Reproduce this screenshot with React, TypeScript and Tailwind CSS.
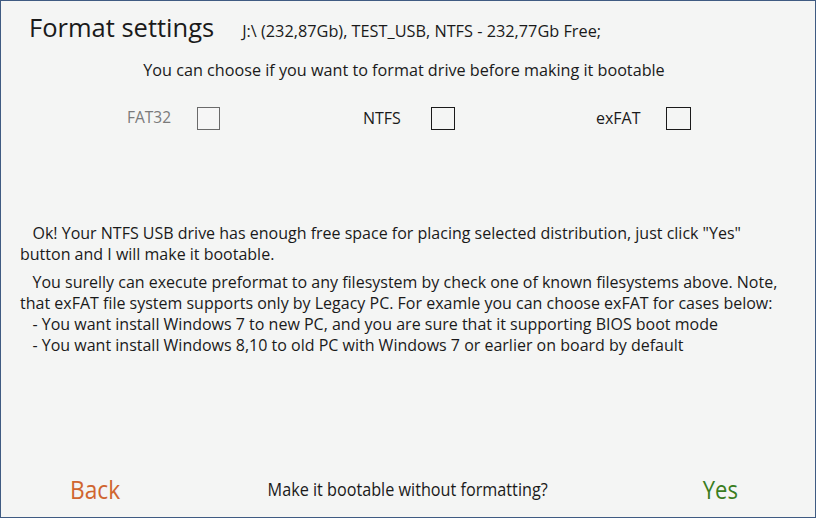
export default function App() {
  const body = "text-[16px] leading-[21px] text-[#1a1a1a] whitespace-pre";

  return (
    <div
      className="flex h-[518px] w-[816px] flex-col border border-[#3f5b82] bg-[#f4f5f4] text-[#1a1a1a]"
      style={{ fontFamily: '"Open Sans", "Noto Sans", sans-serif' }}
    >
      {/* header */}
      <div className="flex items-baseline pl-[28px] pt-[8px]">
        <h1 className="text-[25.5px] leading-[36px] font-normal">Format settings</h1>
        <span className="ml-[28px] text-[16.3px]">J:\ (232,87Gb), TEST_USB, NTFS - 232,77Gb Free;</span>
      </div>

      <p className="mt-[15px] pr-[8px] text-center text-[16.2px] leading-[20px]">
        You can choose if you want to format drive before making it bootable
      </p>

      {/* filesystem options */}
      <div className="mt-[26px] flex items-center pl-[126px] text-[16px]">
        <label className="flex w-[236px] items-center">
          <span className="w-[70px] text-[15.5px] text-[#7a7a7a]">FAT32</span>
          <span className="h-[23px] w-[23px] border border-[#6a6a6a] bg-[#f6f6f6]" />
        </label>
        <label className="flex w-[233px] items-center">
          <span className="w-[68px]">NTFS</span>
          <span className="h-[23px] w-[24px] border border-[#1a1a1a]" />
        </label>
        <label className="flex items-center">
          <span className="w-[70px]">exFAT</span>
          <span className="h-[23px] w-[25px] border border-[#1a1a1a]" />
        </label>
      </div>

      {/* info text */}
      <div className="mt-[93px] pl-[19px]">
        <div className={body}>{'   Ok! Your NTFS USB drive has enough free space for placing selected distribution, just click "Yes"'}</div>
        <div className={body}>button and I will make it bootable.</div>
        <div className={`${body} mt-[7px]`}>{"   You surelly can execute preformat to any filesystem by check one of known filesystems above. Note,"}</div>
        <div className={body}>that exFAT file system supports only by Legacy PC. For examle you can choose exFAT for cases below:</div>
        <div className={body}>{"   - You want install Windows 7 to new PC, and you are sure that it supporting BIOS boot mode"}</div>
        <div className={body}>{"   - You want install Windows 8,10 to old PC with Windows 7 or earlier on board by default"}</div>
      </div>

      {/* footer */}
      <div className="mt-auto mb-[12px] flex items-center justify-between pl-[69px] pr-[77px]">
        <button type="button" className="origin-left scale-x-[0.91] text-[25px] leading-[32px] text-[#d0652f]">
          Back
        </button>
        <span className="origin-center -translate-x-[4px] scale-x-[0.9] text-[18px] leading-[24px]">Make it bootable without formatting?</span>
        <button type="button" className="origin-right scale-x-[0.88] text-[25px] leading-[32px] text-[#3a7d1e]">
          Yes
        </button>
      </div>
    </div>
  );
}
